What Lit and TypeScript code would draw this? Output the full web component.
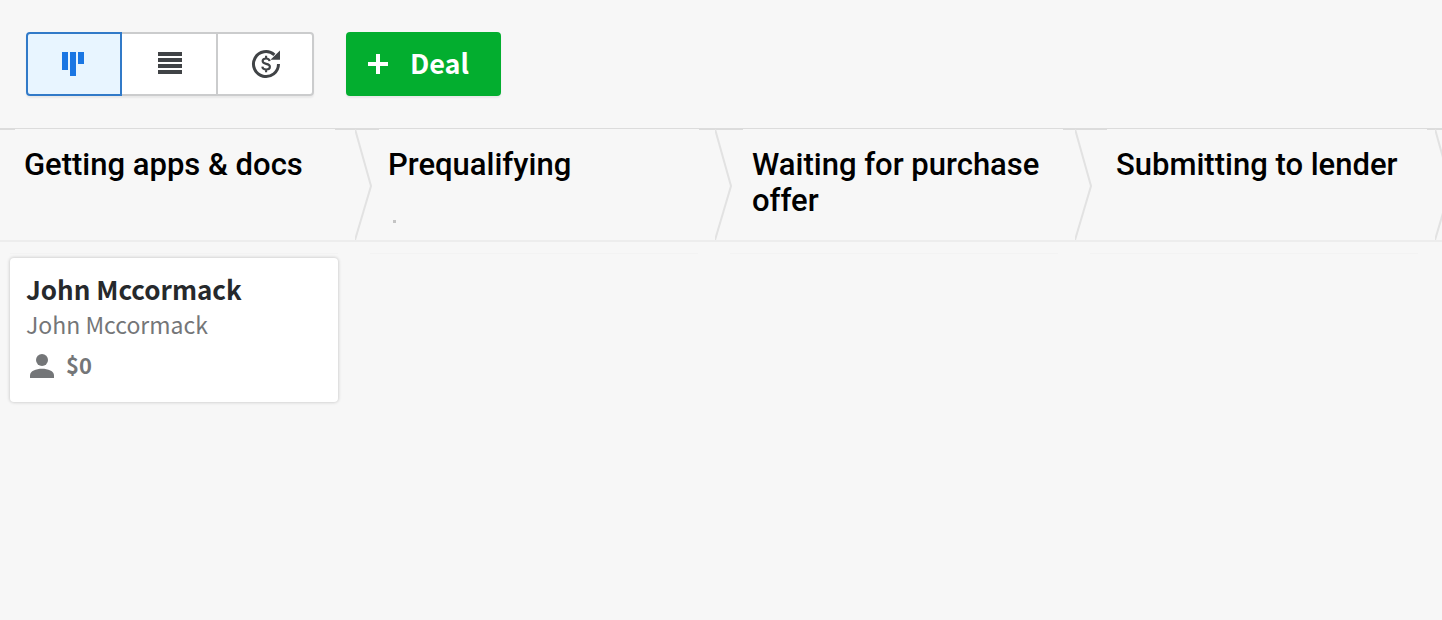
import { LitElement, html, svg, css } from "lit";
import { customElement, state } from "lit/decorators.js";

interface Deal {
  title: string;
  contact: string;
  value: string;
}

interface Stage {
  name: string;
  marker?: boolean;
  deals: Deal[];
}

const STAGES: Stage[] = [
  {
    name: "Getting apps & docs",
    deals: [{ title: "John Mccormack", contact: "John Mccormack", value: "$0" }],
  },
  { name: "Prequalifying", marker: true, deals: [] },
  { name: "Waiting for purchase offer", deals: [] },
  { name: "Submitting to lender", deals: [] },
];

const VIEWS = [
  {
    id: "pipeline",
    label: "Pipeline view",
    icon: svg`<path d="M4 4h6v18H4zM12 4h6v24h-6zM20 4h6v12h-6z"/>`,
  },
  {
    id: "list",
    label: "List view",
    icon: svg`<path d="M4 4h24v4H4zM4 10h24v4H4zM4 16h24v4H4zM4 22h24v4H4z"/>`,
  },
  {
    id: "forecast",
    label: "Forecast view",
    icon: svg`
      <path d="M24.4 6.800A12.500 12.500 0 1 0 28.500 16" fill="none" stroke="currentColor" stroke-width="3"/>
      <path d="M30 2.500v9.300H20.500z"/>
      <path d="M19.600 13.200c-.2-1.700-1.500-2.700-3.500-2.700-2.100 0-3.500 1-3.500 2.600 0 1.700 1.300 2.300 3.600 2.800 2.400.5 3.700 1.100 3.700 2.800s-1.500 2.800-3.700 2.800c-2.300 0-3.700-1.100-3.900-2.900M16.100 7.800v2.600M16.100 21.600v2.600" fill="none" stroke="currentColor" stroke-width="2.1"/>`,
  },
];

@customElement("app-root")
export class AppRoot extends LitElement {
  @state() private view = "pipeline";

  static styles = css`
    :host {
      display: block;
      min-height: 100vh;
      background: #f7f7f7;
      color: #26292c;
      font-family: "Noto Sans CJK SC", "Open Sans", sans-serif;
      overflow-x: hidden;
    }
    .toolbar {
      display: flex;
      gap: 32px;
      padding: 32px 26px;
    }
    .views {
      display: flex;
      border-radius: 4px;
      box-shadow: 0 2px 2px rgba(0, 0, 0, 0.06);
    }
    .view {
      display: flex;
      align-items: center;
      justify-content: center;
      box-sizing: border-box;
      width: 98px;
      height: 64px;
      margin: 0 0 0 -2px;
      padding: 0 0 0 2px;
      border: 2px solid #cbcccd;
      background: #fff;
      color: #404346;
      cursor: pointer;
    }
    .view:first-child {
      width: 96px;
      margin-left: 0;
      padding: 0;
      border-radius: 4px 0 0 4px;
    }
    .view:last-child {
      border-radius: 0 4px 4px 0;
    }
    .view.active {
      position: relative;
      border-color: #317ac8;
      background: #e8f5ff;
      color: #1a76e3;
    }
    .view svg {
      width: 32px;
      height: 32px;
      fill: currentColor;
    }
    .add {
      display: flex;
      align-items: center;
      gap: 22px;
      height: 64px;
      padding: 0 32px 0 22px;
      border: 0;
      border-radius: 4px;
      background: #03ae2f;
      box-shadow: 0 2px 2px rgba(0, 0, 0, 0.06);
      color: #fff;
      font: 700 27px/40px "Noto Sans CJK SC", sans-serif;
      cursor: pointer;
    }
    .add span {
      padding-bottom: 2px;
    }
    .add svg {
      width: 20px;
      height: 20px;
      fill: currentColor;
    }
    .stages {
      position: relative;
      display: grid;
      grid-template-columns: repeat(4, minmax(0, 1fr));
      gap: 44px;
      padding: 0 15px;
      border-top: 1px solid #dcdcdc;
      border-bottom: 2px solid #ededed;
      box-shadow: inset 0 1px #dcdcdc;
      overflow: hidden;
    }
    .stage {
      min-height: 111px;
      box-sizing: border-box;
      padding: 18px 9px 16px;
      background: #f7f7f7;
    }
    .name {
      margin: 0;
      color: #000;
      font: 500 31px/36px Roboto, sans-serif;
    }
    .marker {
      width: 3px;
      height: 3px;
      margin: 37px 5px 0;
      background: #c4c4c4;
    }
    .arrows {
      position: absolute;
      inset: 0 -10px 0 355px;
      display: flex;
      justify-content: space-between;
      pointer-events: none;
    }
    .arrows svg {
      width: 17px;
      height: 100%;
      fill: none;
      stroke: #e2e2e2;
      stroke-width: 2;
    }
    .board {
      display: grid;
      grid-template-columns: repeat(4, minmax(0, 1fr));
      gap: 32px;
      padding: 11px 24px 0 10px;
    }
    .column {
      border-top: 1px solid #f3f3f3;
      padding-top: 4px;
    }
    .card {
      padding: 13px 16px 20px;
      border-radius: 4px;
      background: #fff;
      box-shadow: 0 0 3px 1px rgba(0, 0, 0, 0.14);
    }
    .title {
      margin: 0;
      font-size: 26px;
      font-weight: 700;
      line-height: 35px;
    }
    .contact {
      margin: 0;
      color: #747678;
      font-size: 23px;
      line-height: 36px;
    }
    .meta {
      display: flex;
      align-items: flex-start;
      gap: 8px;
      height: 34px;
      margin-top: 6px;
      color: #747678;
      font-size: 22px;
      font-weight: 700;
      line-height: 32px;
    }
    .meta svg {
      width: 32px;
      height: 32px;
      margin-top: 2px;
      fill: currentColor;
    }
  `;

  render() {
    return html`
      <header class="toolbar">
        <div class="views" role="group" aria-label="View">
          ${VIEWS.map(
            (v) => html`<button
              class="view ${v.id === this.view ? "active" : ""}"
              aria-label=${v.label}
              aria-pressed=${v.id === this.view}
              @click=${() => (this.view = v.id)}
            >
              <svg viewBox="0 0 32 32" aria-hidden="true">${v.icon}</svg>
            </button>`
          )}
        </div>
        <button class="add">
          <svg viewBox="0 0 20 20" aria-hidden="true">
            <path d="M8 0h4v8h8v4h-8v8H8v-8H0V8h8z" />
          </svg>
          <span>Deal</span>
        </button>
      </header>
      <section class="stages">
        ${STAGES.map(
          (s) => html`<div class="stage">
            <h2 class="name">${s.name}</h2>
            ${s.marker ? html`<div class="marker"></div>` : ""}
          </div>`
        )}
        <div class="arrows" aria-hidden="true">
          ${STAGES.map(
            () => html`<svg viewBox="0 0 17 111" preserveAspectRatio="none">
              <path d="M0 0L16 57L0 111" />
            </svg>`
          )}
        </div>
      </section>
      <main class="board">
        ${STAGES.map(
          (s) => html`<div class="column">
            ${s.deals.map(
              (d) => html`<article class="card">
                <h3 class="title">${d.title}</h3>
                <p class="contact">${d.contact}</p>
                <div class="meta">
                  <svg viewBox="0 0 32 32" aria-hidden="true">
                    <circle cx="16" cy="10" r="6" />
                    <path d="M4 28v-2.500C4 21 10 18.800 16 18.800S28 21 28 25.500V28z" />
                  </svg>
                  <span>${d.value}</span>
                </div>
              </article>`
            )}
          </div>`
        )}
      </main>
    `;
  }
}
